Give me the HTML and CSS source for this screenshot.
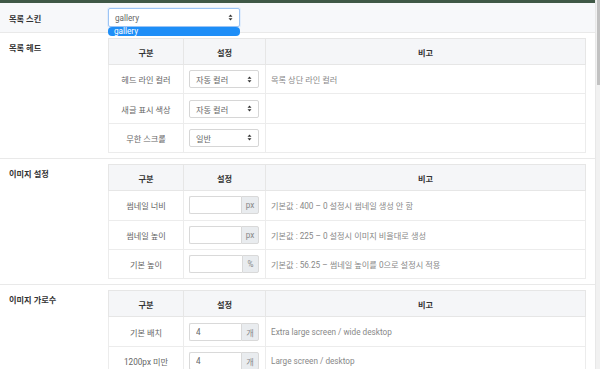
FILE: index.html
```html
<!DOCTYPE html>
<html>
<head>
    <title>목록 설정</title>
    <link rel="stylesheet" href="styles.css">
</head>
<body>
<div class="page">
    <div class="content">
        <div class="topbar"></div>

        <div class="section skin-row">
            <div class="label">목록 스킨</div>
            <div class="body">
                <div class="skin-select">
                    <div class="select focused">
                        <span>gallery</span>
                        <svg class="caret" width="5" height="7" viewBox="0 0 5 7"><path d="M0.5 2.8 L2.5 0.6 L4.5 2.8 Z M0.5 4.2 L2.5 6.4 L4.5 4.2 Z" fill="#333"/></svg>
                    </div>
                    <div class="dropdown">gallery</div>
                </div>
            </div>
        </div>

        <div class="section">
            <div class="label">목록 헤드</div>
            <div class="body">
                <table class="opts">
                    <tr><th class="c1">구분</th><th class="c2">설정</th><th>비고</th></tr>
                    <tr>
                        <td class="name">헤드 라인 컬러</td>
                        <td><div class="select small"><span>자동 컬러</span><svg class="caret" width="5" height="7" viewBox="0 0 5 7"><path d="M0.5 2.8 L2.5 0.6 L4.5 2.8 Z M0.5 4.2 L2.5 6.4 L4.5 4.2 Z" fill="#333"/></svg></div></td>
                        <td class="note">목록 상단 라인 컬러</td>
                    </tr>
                    <tr>
                        <td class="name">새글 표시 색상</td>
                        <td><div class="select small"><span>자동 컬러</span><svg class="caret" width="5" height="7" viewBox="0 0 5 7"><path d="M0.5 2.8 L2.5 0.6 L4.5 2.8 Z M0.5 4.2 L2.5 6.4 L4.5 4.2 Z" fill="#333"/></svg></div></td>
                        <td class="note"></td>
                    </tr>
                    <tr>
                        <td class="name">무한 스크롤</td>
                        <td><div class="select small"><span>일반</span><svg class="caret" width="5" height="7" viewBox="0 0 5 7"><path d="M0.5 2.8 L2.5 0.6 L4.5 2.8 Z M0.5 4.2 L2.5 6.4 L4.5 4.2 Z" fill="#333"/></svg></div></td>
                        <td class="note"></td>
                    </tr>
                </table>
            </div>
        </div>

        <div class="section">
            <div class="label">이미지 설정</div>
            <div class="body">
                <table class="opts">
                    <tr><th class="c1">구분</th><th class="c2">설정</th><th>비고</th></tr>
                    <tr>
                        <td class="name">썸네일 너비</td>
                        <td><div class="input-group"><input type="text"><span class="addon">px</span></div></td>
                        <td class="note">기본값 : 400 – 0 설정시 썸네일 생성 안 함</td>
                    </tr>
                    <tr>
                        <td class="name">썸네일 높이</td>
                        <td><div class="input-group"><input type="text"><span class="addon">px</span></div></td>
                        <td class="note">기본값 : 225 – 0 설정시 이미지 비율대로 생성</td>
                    </tr>
                    <tr>
                        <td class="name">기본 높이</td>
                        <td><div class="input-group"><input type="text"><span class="addon pct">%</span></div></td>
                        <td class="note">기본값 : 56.25 – 썸네일 높이를 0으로 설정시 적용</td>
                    </tr>
                </table>
            </div>
        </div>

        <div class="section">
            <div class="label">이미지 가로수</div>
            <div class="body">
                <table class="opts">
                    <tr><th class="c1">구분</th><th class="c2">설정</th><th>비고</th></tr>
                    <tr>
                        <td class="name">기본 배치</td>
                        <td><div class="input-group"><input type="text" value="4"><span class="addon">개</span></div></td>
                        <td class="note">Extra large screen / wide desktop</td>
                    </tr>
                    <tr>
                        <td class="name">1200px 미만</td>
                        <td><div class="input-group"><input type="text" value="4"><span class="addon">개</span></div></td>
                        <td class="note">Large screen / desktop</td>
                    </tr>
                </table>
            </div>
        </div>
    </div>
    <div class="scrollbar"><div class="thumb"></div></div>
</div>
</body>
</html>
```

FILE: styles.css
```css
html, body {
    margin: 0;
    padding: 0;
    height: 369px;
    overflow: hidden;
    background: #fff;
}
body {
    font-family: Roboto, "Noto Sans CJK KR", sans-serif;
    font-size: 8.2px;
    color: #555;
}
.page {
    display: flex;
    height: 369px;
}
.content {
    flex: 1;
    overflow: hidden;
    border-right: 1px solid #e8e8e8;
}
.topbar {
    height: 3px;
    background: #3f5846;
}
.section {
    display: flex;
    padding: 5px 9px 5px 0;
    border-bottom: 1px solid #e9e9e9;
}
.skin-row {
    background: #f7f8fa;
    position: relative;
    z-index: 2;
}
.label {
    width: 99px;
    padding-left: 9px;
    padding-top: 3px;
    font-weight: bold;
    color: #333;
}
.skin-row .label {
    padding-top: 4px;
}
.body {
    flex: 1;
}
.skin-select {
    position: relative;
    width: 132px;
}
.select {
    display: flex;
    align-items: center;
    justify-content: space-between;
    box-sizing: border-box;
    height: 19px;
    padding: 0 6px;
    background: #fff;
    border: 1px solid #d6d6d6;
    border-radius: 2px;
    color: #666;
}
.select.focused {
    border-color: #9cc4f4;
    box-shadow: 0 0 0 1px #e3eefc;
}
.select.small {
    width: 70px;
    height: 18px;
}
.caret {
    display: block;
}
.dropdown {
    position: absolute;
    left: 0;
    right: 0;
    top: 19px;
    height: 9px;
    line-height: 9px;
    padding-left: 6px;
    background: #1e8ef7;
    color: #fff;
    border-radius: 4px;
}
.opts {
    width: 100%;
    border-collapse: collapse;
    border: 1px solid #e6e6e6;
}
.opts th {
    height: 25px;
    background: #f5f6f8;
    color: #333;
    font-weight: bold;
    border: 1px solid #e6e6e6;
    padding: 0;
}
.opts th.c1 {
    width: 74px;
}
.opts th.c2 {
    width: 81px;
}
.opts td {
    height: 28.4px;
    border: 1px solid #ececec;
    padding: 0 5px;
}
.opts td.name {
    text-align: center;
    color: #666;
    padding: 0;
}
.opts td.note {
    color: #888;
}
.input-group {
    display: flex;
    width: 70px;
    height: 18px;
}
.input-group input {
    flex: 1;
    min-width: 0;
    box-sizing: border-box;
    height: 18px;
    margin: 0;
    border: 1px solid #d9d9d9;
    border-right: none;
    border-radius: 2px 0 0 2px;
    padding: 0 6px;
    font-family: Roboto, "Noto Sans CJK KR", sans-serif;
    font-size: 8.2px;
    color: #666;
    outline: none;
}
.addon {
    width: 18px;
    box-sizing: border-box;
    display: flex;
    align-items: center;
    justify-content: center;
    background: #e9ecef;
    border: 1px solid #d9d9d9;
    border-radius: 0 2px 2px 0;
    color: #888;
}
.addon.pct {
    width: 17px;
}
.scrollbar {
    width: 4px;
    background: #f1f1f1;
}
.thumb {
    width: 3px;
    margin-left: 1px;
    height: 85px;
    background: #c1c1c1;
}
```
